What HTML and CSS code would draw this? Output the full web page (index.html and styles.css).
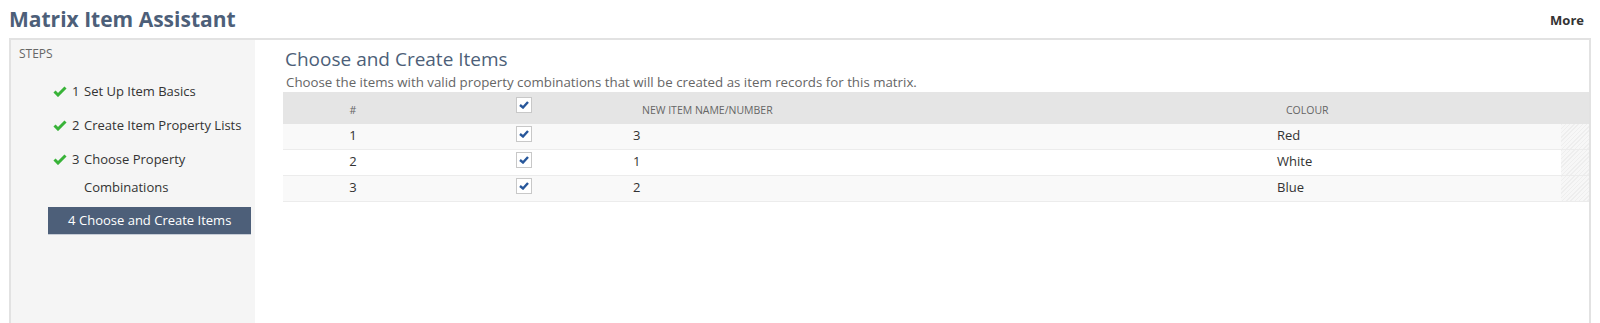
FILE: index.html
```html
<!DOCTYPE html>
<html lang="en">
  <head>
    <meta charset="UTF-8" />
    <title>Matrix Item Assistant</title>
    <link rel="stylesheet" href="styles.css">
  </head>
  <body>
    <div class="pageHead">
      <h1 class="pageTitle">Matrix Item Assistant</h1>
      <a class="moreLink" href="#">More</a>
    </div>
    <div class="assistant">
      <div class="steps">
        <div class="stepsTitle">STEPS</div>
        <ul class="stepList">
          <li class="step done">
            <svg class="tick" viewBox="0 0 14 11"><path d="M1.5 5.5 L5 9 L12.5 1.5" /></svg>
            <span class="num">1</span><span class="label">Set Up Item Basics</span>
          </li>
          <li class="step done">
            <svg class="tick" viewBox="0 0 14 11"><path d="M1.5 5.5 L5 9 L12.5 1.5" /></svg>
            <span class="num">2</span><span class="label">Create Item Property Lists</span>
          </li>
          <li class="step done">
            <svg class="tick" viewBox="0 0 14 11"><path d="M1.5 5.5 L5 9 L12.5 1.5" /></svg>
            <span class="num">3</span><span class="label">Choose Property Combinations</span>
          </li>
          <li class="step current">
            <span class="num">4</span><span class="label">Choose and Create Items</span>
          </li>
        </ul>
      </div>
      <div class="content">
        <h2 class="contentTitle">Choose and Create Items</h2>
        <p class="intro">Choose the items with valid property combinations that will be created as item records for this matrix.</p>
        <div class="grid">
          <div class="row head">
            <div class="cell num">#</div>
            <div class="cell chk"><span class="box"><svg viewBox="0 0 10 8"><path d="M1 4 L4 6.5 L9 1" /></svg></span></div>
            <div class="cell">NEW ITEM NAME/NUMBER</div>
            <div class="cell">COLOUR</div>
            <div class="cell"></div>
          </div>
          <div class="row odd">
            <div class="cell num">1</div>
            <div class="cell chk"><span class="box"><svg viewBox="0 0 10 8"><path d="M1 4 L4 6.5 L9 1" /></svg></span></div>
            <div class="cell">3</div>
            <div class="cell">Red</div>
            <div class="cell filler"></div>
          </div>
          <div class="row">
            <div class="cell num">2</div>
            <div class="cell chk"><span class="box"><svg viewBox="0 0 10 8"><path d="M1 4 L4 6.5 L9 1" /></svg></span></div>
            <div class="cell">1</div>
            <div class="cell">White</div>
            <div class="cell filler"></div>
          </div>
          <div class="row odd">
            <div class="cell num">3</div>
            <div class="cell chk"><span class="box"><svg viewBox="0 0 10 8"><path d="M1 4 L4 6.5 L9 1" /></svg></span></div>
            <div class="cell">2</div>
            <div class="cell">Blue</div>
            <div class="cell filler"></div>
          </div>
        </div>
      </div>
    </div>
  </body>
</html>
```

FILE: styles.css
```css
body {
  margin: 0;
  font-family: "Open Sans", "Liberation Sans", sans-serif;
  color: #333333;
  background-color: white;
  height: 323px;
  overflow: hidden;
}
.pageHead {
  height: 38px;
  display: flex;
  align-items: center;
  justify-content: space-between;
  padding: 0 16px 0 9px;
}
.pageTitle {
  margin: 0;
  font-size: 21px;
  font-weight: 700;
  color: #4d5f79;
}
.moreLink {
  font-size: 13px;
  font-weight: 700;
  color: #333333;
  text-decoration: none;
  padding-top: 2px;
}
.assistant {
  margin: 0 9px;
  border: 2px solid #e2e2e2;
  border-bottom: none;
  display: flex;
  height: 285px;
}
.steps {
  width: 244px;
  background-color: #f5f5f5;
  padding-top: 6px;
}
.stepsTitle {
  font-size: 12px;
  color: #666666;
  padding-left: 8px;
  line-height: 16px;
}
.stepList {
  list-style: none;
  margin: 15px 0 0 0;
  padding: 0;
  display: flex;
  flex-direction: column;
  gap: 6px;
}
.step {
  margin-left: 37px;
  width: 203px;
  display: flex;
  align-items: flex-start;
  font-size: 13px;
  line-height: 28px;
  color: #333333;
}
.step .num {
  width: 12px;
  flex: none;
}
.step .tick {
  width: 14px;
  height: 11px;
  margin: 9px 5px 0 5px;
  flex: none;
}
.tick path {
  fill: none;
  stroke: #38b338;
  stroke-width: 3;
}
.step.current {
  background-color: #4d5f79;
  color: white;
  padding-left: 20px;
  box-sizing: border-box;
  border-bottom: 1px solid #c6ccd6;
  line-height: 27px;
}
.step.current .num {
  width: 11px;
}
.content {
  flex: 1;
  padding: 6px 0 0 28px;
}
.contentTitle {
  margin: 0 0 0 2px;
  font-size: 19px;
  font-weight: 400;
  color: #4d5f79;
  line-height: 26px;
}
.intro {
  margin: 0 0 0 3px;
  font-size: 13.3px;
  color: #666666;
  line-height: 20px;
}
.grid {
  font-size: 13px;
}
.row {
  display: grid;
  grid-template-columns: 140px 202px 644px 1fr 28px;
  height: 25px;
  border-bottom: 1px solid #ececec;
  align-items: start;
  line-height: 20px;
}
.row .cell {
  padding-top: 1px;
}
.row.odd {
  background-color: #f9f9f9;
}
.row.head {
  height: 32px;
  background-color: #e5e5e5;
  border-bottom: none;
  font-size: 10.5px;
  line-height: 14px;
  color: #666666;
}
.cell {
  padding-left: 8px;
}
.head .cell {
  padding: 11px 0 0 17px;
}
.cell.num {
  padding-left: 0;
  text-align: center;
}
.head .cell.num {
  padding-left: 0;
}
.row .cell.chk {
  padding: 2px 0 0 0;
  display: flex;
  justify-content: center;
}
.head .cell.chk {
  padding-top: 5px;
}
.box {
  width: 14px;
  height: 14px;
  border: 1px solid #c8c8c8;
  background-color: white;
  display: flex;
  align-items: center;
  justify-content: center;
}
.box svg {
  width: 10px;
  height: 8px;
}
.box path {
  fill: none;
  stroke: #27579b;
  stroke-width: 2.4;
}
.row .cell.filler {
  height: 100%;
  padding: 0;
  background: repeating-linear-gradient(135deg, #eeeeee 0 1px, #f7f7f7 1px 3px);
}
```
